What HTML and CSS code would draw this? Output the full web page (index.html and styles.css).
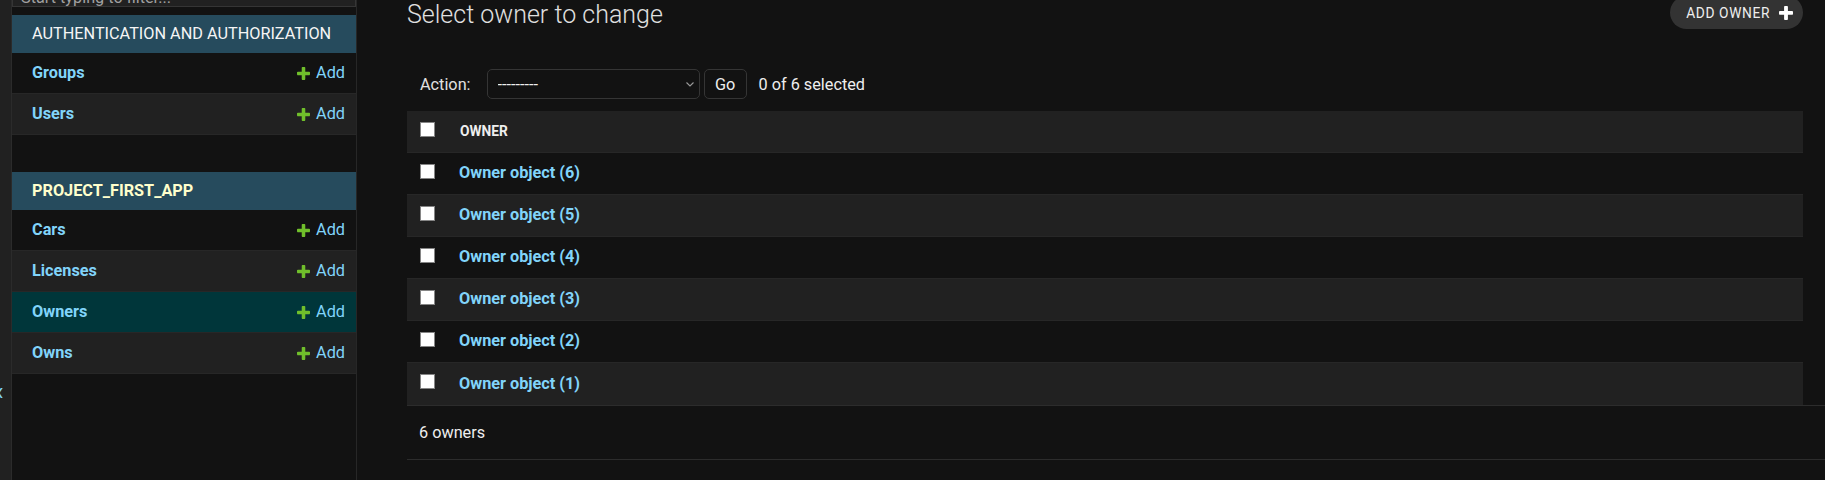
FILE: index.html
```html
<!DOCTYPE html>
<html lang="en">
<head>
<meta charset="utf-8">
<title>Select owner to change</title>
<link rel="stylesheet" href="styles.css">
</head>
<body>
<div class="page">
  <div class="toggle"><span>&laquo;</span></div>
  <nav class="sidebar">
    <input class="nav-filter" type="search" placeholder="Start typing to filter...">
    <div class="module">
      <div class="caption">Authentication and Authorization</div>
      <div class="row"><a class="model" href="#">Groups</a><a class="add" href="#"><svg class="plus" viewBox="192 192 1408 1408" width="13" height="13"><path fill="#70bf2b" d="M1600 796v192q0 40-28 68t-68 28h-416v416q0 40-28 68t-68 28h-192q-40 0-68-28t-28-68v-416h-416q-40 0-68-28t-28-68v-192q0-40 28-68t68-28h416v-416q0-40 28-68t68-28h192q40 0 68 28t28 68v416h416q40 0 68 28t28 68z"/></svg>Add</a></div>
      <div class="row"><a class="model" href="#">Users</a><a class="add" href="#"><svg class="plus" viewBox="192 192 1408 1408" width="13" height="13"><path fill="#70bf2b" d="M1600 796v192q0 40-28 68t-68 28h-416v416q0 40-28 68t-68 28h-192q-40 0-68-28t-28-68v-416h-416q-40 0-68-28t-28-68v-192q0-40 28-68t68-28h416v-416q0-40 28-68t68-28h192q40 0 68 28t28 68v416h416q40 0 68 28t28 68z"/></svg>Add</a></div>
    </div>
    <div class="module">
      <div class="caption current">Project_first_app</div>
      <div class="row"><a class="model" href="#">Cars</a><a class="add" href="#"><svg class="plus" viewBox="192 192 1408 1408" width="13" height="13"><path fill="#70bf2b" d="M1600 796v192q0 40-28 68t-68 28h-416v416q0 40-28 68t-68 28h-192q-40 0-68-28t-28-68v-416h-416q-40 0-68-28t-28-68v-192q0-40 28-68t68-28h416v-416q0-40 28-68t68-28h192q40 0 68 28t28 68v416h416q40 0 68 28t28 68z"/></svg>Add</a></div>
      <div class="row"><a class="model" href="#">Licenses</a><a class="add" href="#"><svg class="plus" viewBox="192 192 1408 1408" width="13" height="13"><path fill="#70bf2b" d="M1600 796v192q0 40-28 68t-68 28h-416v416q0 40-28 68t-68 28h-192q-40 0-68-28t-28-68v-416h-416q-40 0-68-28t-28-68v-192q0-40 28-68t68-28h416v-416q0-40 28-68t68-28h192q40 0 68 28t28 68v416h416q40 0 68 28t28 68z"/></svg>Add</a></div>
      <div class="row current"><a class="model" href="#">Owners</a><a class="add" href="#"><svg class="plus" viewBox="192 192 1408 1408" width="13" height="13"><path fill="#70bf2b" d="M1600 796v192q0 40-28 68t-68 28h-416v416q0 40-28 68t-68 28h-192q-40 0-68-28t-28-68v-416h-416q-40 0-68-28t-28-68v-192q0-40 28-68t68-28h416v-416q0-40 28-68t68-28h192q40 0 68 28t28 68v416h416q40 0 68 28t28 68z"/></svg>Add</a></div>
      <div class="row"><a class="model" href="#">Owns</a><a class="add" href="#"><svg class="plus" viewBox="192 192 1408 1408" width="13" height="13"><path fill="#70bf2b" d="M1600 796v192q0 40-28 68t-68 28h-416v416q0 40-28 68t-68 28h-192q-40 0-68-28t-28-68v-416h-416q-40 0-68-28t-28-68v-192q0-40 28-68t68-28h416v-416q0-40 28-68t68-28h192q40 0 68 28t28 68v416h416q40 0 68 28t28 68z"/></svg>Add</a></div>
    </div>
  </nav>
  <main class="content">
    <div class="head">
      <h1>Select owner to change</h1>
      <a class="object-tool" href="#">Add owner<svg viewBox="192 192 1408 1408" width="14" height="14"><path fill="#ffffff" d="M1600 796v192q0 40-28 68t-68 28h-416v416q0 40-28 68t-68 28h-192q-40 0-68-28t-28-68v-416h-416q-40 0-68-28t-28-68v-192q0-40 28-68t68-28h416v-416q0-40 28-68t68-28h192q40 0 68 28t28 68v416h416q40 0 68 28t28 68z"/></svg></a>
    </div>
    <div class="actions">
      <label class="action-label">Action:</label>
      <div class="select-wrap">
        <select class="action-select"><option>---------</option></select>
        <svg class="chev" viewBox="0 0 8 5" width="8" height="5"><path d="M0.5 0.5 L4 4 L7.5 0.5" fill="none" stroke="#9a9a9a" stroke-width="1.1"/></svg>
      </div>
      <button class="go" type="button">Go</button>
      <span class="counter">0 of 6 selected</span>
    </div>
    <div class="results">
      <div class="rrow header"><div class="ccheck"><span class="cb"></span></div><div class="cmain">Owner</div></div>
      <div class="rrow"><div class="ccheck"><span class="cb"></span></div><div class="cmain"><a href="#">Owner object (6)</a></div></div>
      <div class="rrow"><div class="ccheck"><span class="cb"></span></div><div class="cmain"><a href="#">Owner object (5)</a></div></div>
      <div class="rrow"><div class="ccheck"><span class="cb"></span></div><div class="cmain"><a href="#">Owner object (4)</a></div></div>
      <div class="rrow"><div class="ccheck"><span class="cb"></span></div><div class="cmain"><a href="#">Owner object (3)</a></div></div>
      <div class="rrow"><div class="ccheck"><span class="cb"></span></div><div class="cmain"><a href="#">Owner object (2)</a></div></div>
      <div class="rrow"><div class="ccheck"><span class="cb"></span></div><div class="cmain"><a href="#">Owner object (1)</a></div></div>
    </div>
    <p class="paginator">6 owners</p>
  </main>
</div>
</body>
</html>
```
FILE: styles.css
```css
html, body {
  margin: 0;
  background: #121212;
  color: #eeeeee;
  font-family: Roboto, "Noto Sans", "Liberation Sans", sans-serif;
  font-size: 16.25px;
}

.page {
  display: flex;
  height: 480px;
  overflow: hidden;
}

/* collapse toggle strip */
.toggle {
  flex: 0 0 12px;
  box-sizing: border-box;
  background: #212121;
  border-right: 1px solid #2b2b2b;
  overflow: hidden;
  padding-top: 379px;
  color: #81d4fa;
  font-size: 25px;
  line-height: 25px;
}
.toggle span {
  display: block;
  margin-left: -8px;
}

/* sidebar */
.sidebar {
  flex: 0 0 344px;
  border-right: 1px solid #272727;
  background: #121212;
}
.nav-filter {
  display: block;
  width: 100%;
  box-sizing: border-box;
  height: 26px;
  margin: -19px 0 8px;
  padding: 6px 8px 0;
  border: 1px solid #353535;
  background: #212121;
  color: #eeeeee;
  font: inherit;
  outline: none;
}
.nav-filter::placeholder {
  color: #a0a0a0;
}
.module {
  margin-bottom: 37px;
}
.caption {
  height: 38px;
  box-sizing: border-box;
  display: flex;
  align-items: center;
  padding: 0 0 2px 20px;
  background: #264b5d;
  color: #f5f5f5;
  text-transform: uppercase;
  letter-spacing: 0;
}
.caption.current {
  color: #ffffcc;
  font-weight: 700;
}
.row {
  height: 40px;
  box-sizing: border-box;
  border-bottom: 1px solid #272727;
  display: flex;
  align-items: center;
  justify-content: space-between;
  padding: 0 11px 2px 20px;
}
.row {
  height: 41px;
}
.row:nth-child(odd) {
  background: #212121;
}
.row.current {
  background: #00363a;
}
.model {
  color: #81d4fa;
  font-weight: 700;
  text-decoration: none;
}
.add {
  display: flex;
  align-items: center;
  gap: 6px;
  color: #81d4fa;
  text-decoration: none;
}
.plus {
  display: block;
  margin-top: 2px;
}

/* main content */
.content {
  flex: 1;
  min-width: 0;
  padding: 0 22px 0 50px;
}
.head {
  display: flex;
  justify-content: space-between;
  align-items: flex-start;
  height: 30px;
}
h1 {
  margin: 0;
  font-size: 25px;
  font-weight: 300;
  line-height: 30px;
  color: #e0e0e0;
}
.object-tool {
  margin-top: -4px;
  height: 33px;
  box-sizing: border-box;
  display: flex;
  align-items: center;
  gap: 9px;
  padding: 0 10px 0 16px;
  border-radius: 17px;
  background: #333333;
  color: #eeeeee;
  font-size: 13.75px;
  letter-spacing: 0.625px;
  text-transform: uppercase;
  text-decoration: none;
}
.object-tool svg {
  display: block;
}

.actions {
  margin-top: 27px;
  padding: 12px 12px 12px 13px;
  height: 30px;
  display: flex;
  align-items: center;
  color: #e0e0e0;
}
.action-label {
  margin-right: 16px;
}
.select-wrap {
  position: relative;
  margin-right: 4px;
}
.action-select {
  display: block;
  appearance: none;
  -webkit-appearance: none;
  width: 213px;
  height: 30px;
  box-sizing: border-box;
  padding: 0 24px 0 10px;
  background: #121212;
  color: #eeeeee;
  border: 1px solid #353535;
  border-radius: 5px;
  font: inherit;
  outline: none;
}
.chev {
  position: absolute;
  right: 6px;
  top: 13px;
  pointer-events: none;
}
.go {
  width: 43px;
  height: 30px;
  box-sizing: border-box;
  padding: 0;
  background: #121212;
  color: #eeeeee;
  border: 1px solid #353535;
  border-radius: 5px;
  font: inherit;
  margin-right: 12px;
}
.counter {
  color: #eeeeee;
}

/* results */
.results {
  display: flex;
  flex-direction: column;
}
.rrow {
  display: flex;
  height: 42px;
  box-sizing: border-box;
  border-bottom: 1px solid #272727;
}
.rrow:nth-child(even) {
  background: #121212;
}
.rrow:nth-child(odd) {
  background: #212121;
}
.rrow:last-child {
  border-bottom: none;
}
.ccheck {
  flex: 0 0 51px;
  box-sizing: border-box;
  padding: 11px 0 0 13px;
}
.cb {
  display: block;
  width: 13px;
  height: 13px;
  background: #ffffff;
  border: 1px solid #858585;
}
.cmain {
  flex: 1;
  display: flex;
  align-items: center;
  padding: 0 0 2px 1px;
}
.cmain a {
  color: #81d4fa;
  font-weight: 700;
  text-decoration: none;
}
.rrow.header .cmain {
  font-size: 13.75px;
  font-weight: 700;
  text-transform: uppercase;
  color: #eeeeee;
  padding-left: 2px;
}

.paginator {
  margin: 0 -22px 0 0;
  height: 55px;
  box-sizing: border-box;
  display: flex;
  align-items: center;
  padding-left: 12px;
  border-top: 1px solid #2c2c2c;
  border-bottom: 1px solid #2c2c2c;
  color: #eeeeee;
}
```
